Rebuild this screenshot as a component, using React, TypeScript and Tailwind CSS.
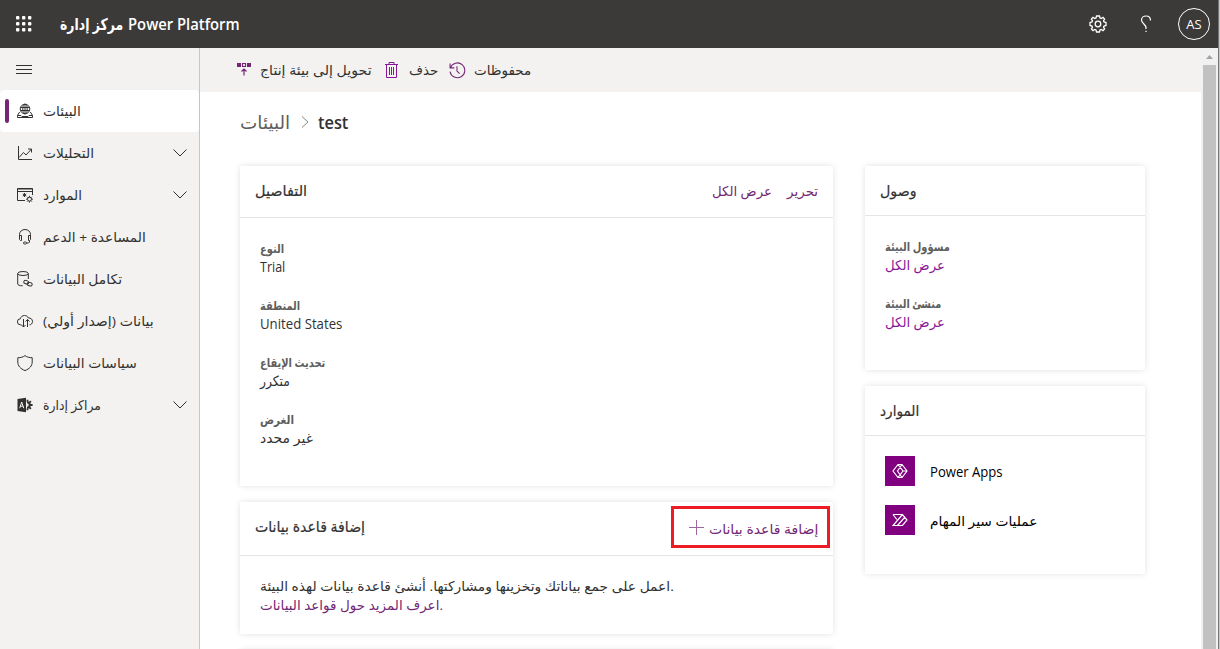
import React, { useLayoutEffect, useRef, useState } from 'react';

interface FitProps {
  w: number;
  className?: string;
  children: React.ReactNode;
}

// Single-line label squeezed or stretched to a fixed width
const Fit: React.FC<FitProps> = ({ w, className = '', children }) => {
  const ref = useRef<HTMLSpanElement>(null);
  const [scale, setScale] = useState(1);

  useLayoutEffect(() => {
    if (ref.current) setScale(w / ref.current.offsetWidth);
  }, [w]);

  return (
    <span className={`block shrink-0 whitespace-nowrap ${className}`} style={{ width: w }}>
      <span ref={ref} className="inline-block origin-left" style={{ transform: `scaleX(${scale})` }}>
        {children}
      </span>
    </span>
  );
};

const Svg: React.FC<{ className?: string; children: React.ReactNode }> = ({ className = 'w-4 h-4', children }) => (
  <svg viewBox="0 0 16 16" fill="none" stroke="currentColor" strokeWidth="1" className={`block shrink-0 ${className}`}>
    {children}
  </svg>
);

const GlobeIcon = () => (
  <Svg>
    <circle cx="8" cy="6" r="4.800" />
    <ellipse cx="8" cy="6" rx="2.200" ry="4.800" />
    <path d="M3.500 4.500h9M3.500 7.500h9M8 1.200v9.600M3 9.500H2.200L.5 12.500v2h15v-2l-1.700-3H13M.7 12.500h3.300l1 1h6l1-1h3.300" />
  </Svg>
);

const ChartIcon = () => (
  <Svg>
    <path d="M1.500 1v13.500H15M2 12.500l4.500-5 2.500 2.500 5.500-6M11 4h3.500v3.500" />
  </Svg>
);

const ResourcesIcon = () => (
  <Svg>
    <path d="M8 13.500H.5v-12h15V8M.5 4.500h15M.5 2h15M7.500 6v4M5.800 7l3.400 2M9.200 7 5.800 9" />
    <circle cx="12.500" cy="12.200" r="2" />
    <path d="M12.500 8.800v1.400M12.500 14.200v1.400M9.100 12.200h1.400M14.500 12.200h1.400M10.100 9.800l1 1M13.900 13.600l1 1M14.900 9.800l-1 1M11.100 13.600l-1 1" />
  </Svg>
);

const HeadsetIcon = () => (
  <Svg>
    <path d="M2.500 7V5.500C2.500 2.500 5 .5 8 .5s5.500 2 5.500 5V7M2.500 6.500h2v5h-1l-1-1zM13.500 6.500h-2v5h1l1-1zM12.500 11.500v1.500l-1 1H9.500" />
    <rect x="6.500" y="13" width="3" height="2" rx="1" />
  </Svg>
);

const DataIcon = () => (
  <Svg>
    <ellipse cx="6" cy="2.500" rx="5.300" ry="2" />
    <path d="M.7 2.500v10.500c0 1 2 1.800 5 1.800M11.300 2.500V8" />
    <rect x="6.800" y="9.500" width="5" height="3.300" rx="1.600" transform="rotate(15 9 11)" />
    <rect x="10.200" y="11.500" width="5" height="3.300" rx="1.600" transform="rotate(15 12.500 13)" />
  </Svg>
);

const CloudIcon = () => (
  <Svg>
    <path d="M4.500 11.800H3.500a3 3 0 0 1-.2-6C3.800 3.700 5.500 2.500 7.500 2.500c1.800 0 3.200.9 3.900 2.500 2.300-.2 4.100 1.300 4.100 3.400s-1.300 3.400-3 3.400M6.500 6v8M4.500 12l2 2 2-2M10.500 14V6.500M8.500 8.500l2-2 2 2" />
  </Svg>
);

const ShieldIcon = () => (
  <Svg>
    <path d="M8 .6c2 1.600 4.500 2.100 7.200 2.100V7c0 4-2.700 6.800-7.200 8.600C3.500 13.800.8 11 .8 7V2.700C3.500 2.700 6 2.200 8 .6z" />
  </Svg>
);

const AdminIcon = () => (
  <Svg>
    <path d="M.5 2 9 .8v14.400L.5 14z" fill="currentColor" stroke="none" />
    <path d="M2.700 11.200 4.700 5l2 6.200M3.300 9.200h2.900" stroke="#f3f2f1" />
    <path d="M10 5.300a2.700 2.700 0 0 1 0 5.400" strokeWidth="2" />
    <path d="M10.500 2.800v2M10.500 11.200v2M13 8h2.600M12.200 5.800l1.700-1.700M12.200 10.200l1.700 1.700" strokeWidth="1.800" />
  </Svg>
);

const Chevron = () => (
  <svg viewBox="0 0 14 8" fill="none" stroke="currentColor" className="w-3.5 h-2 block">
    <path d="M.5.5 7 7 13.500.5" />
  </svg>
);

const navItems = [
  { label: 'البيئات', w: 38, icon: <GlobeIcon />, active: true },
  { label: 'التحليلات', w: 51, icon: <ChartIcon />, expandable: true },
  { label: 'الموارد', w: 39, icon: <ResourcesIcon />, expandable: true },
  { label: 'المساعدة + الدعم', w: 103, icon: <HeadsetIcon /> },
  { label: 'تكامل البيانات', w: 79, icon: <DataIcon /> },
  { label: 'بيانات (إصدار أولي)', w: 111, icon: <CloudIcon /> },
  { label: 'سياسات البيانات', w: 94, icon: <ShieldIcon /> },
  { label: 'مراكز إدارة', w: 58, icon: <AdminIcon />, expandable: true },
];

const details = [
  { label: 'النوع', lw: 24, value: 'Trial', vw: 25 },
  { label: 'المنطقة', lw: 40, value: 'United States', vw: 82 },
  { label: 'تحديث الإيقاع', lw: 65, value: 'متكرر', vw: 30 },
  { label: 'الغرض', lw: 34, value: 'غير محدد', vw: 53 },
];

const access = [
  { label: 'مسؤول البيئة', w: 65 },
  { label: 'منشئ البيئة', w: 56 },
];

const Header = () => (
  <header className="h-12 shrink-0 bg-[#3b3a39] text-white flex items-center pl-4">
    <svg viewBox="0 0 16 16" fill="currentColor" className="w-4 h-4">
      {[0, 6, 12].map((y) => [0, 6, 12].map((x) => <rect key={`${x}-${y}`} x={x} y={y} width="3.400" height="3.400" rx="1" />))}
    </svg>
    <div className="ml-[28px] flex gap-[5px] text-base font-semibold">
      <Fit w={63}>مركز إدارة</Fit>
      <Fit w={112}>Power Platform</Fit>
    </div>
    <div className="ml-auto flex items-center pr-2">
      <svg viewBox="0 0 18 18" fill="none" stroke="currentColor" strokeWidth="1.300" className="w-[18px] h-[18px]">
        <path d="M7.500 1h3l.5 2 1.200.5L14 2.400 15.600 4l-1.100 1.800.5 1.200 2 .5v3l-2 .5-.5 1.200 1.100 1.800-1.600 1.600-1.800-1.100-1.200.5-.5 2h-3L7 15l-1.200-.5L4 15.600 2.400 14l1.100-1.800L3 11l-2-.5v-3L3 7l.5-1.200L2.400 4 4 2.400l1.800 1.100L7 3z" />
        <circle cx="9" cy="9" r="2.800" />
      </svg>
      <svg viewBox="0 0 12 18" fill="none" stroke="currentColor" strokeWidth="1.200" className="w-3 h-[18px] ml-[33px]">
        <path d="M10.500 5.500C10.500 2.800 8.600 1 6 1S1.500 2.800 1.500 5c0 3.500 4.500 4 4.500 7.800V14M6 15.700V17" />
      </svg>
      <div className="w-8 h-8 ml-[26px] rounded-full border border-white flex items-center justify-center text-[13px] pt-0.5">AS</div>
    </div>
  </header>
);

const Sidebar = () => (
  <aside className="w-[200px] shrink-0 bg-[#f3f2f1] border-r border-[#c8c6c4] text-[#323130]">
    <div className="h-[42px] pl-4 flex items-center">
      <svg viewBox="0 0 16 11" stroke="currentColor" className="w-4 h-[11px]">
        <path d="M0 1.500h16M0 5.500h16M0 9.500h16" />
      </svg>
    </div>
    <nav>
      {navItems.map((item) => (
        <div key={item.label} className={`h-[42px] flex items-center pr-3 ${item.active ? 'bg-white rounded-sm' : ''}`}>
          <div className={`w-1 h-6 ml-[5px] mr-2 rounded-sm ${item.active ? 'bg-[#742774]' : ''}`} />
          {item.icon}
          <Fit w={item.w} className="ml-2.5">{item.label}</Fit>
          {item.expandable && <div className="ml-auto"><Chevron /></div>}
        </div>
      ))}
    </nav>
  </aside>
);

const Toolbar = () => (
  <div className="h-11 shrink-0 bg-[#f3f2f1] flex items-center pl-9 text-[#323130]">
    <Svg className="w-4 h-4 text-[#742774]">
      <path d="M1 1h4v4H1zM11 1h4v4h-4z" fill="currentColor" stroke="none" />
      <path d="M6.500 1.500h3v3h-3zM8 13.500V7M5.500 9.500 8 7l2.500 2.500" strokeWidth="1.200" />
    </Svg>
    <Fit w={112} className="ml-2">تحويل إلى بيئة إنتاج</Fit>
    <Svg className="w-4 h-4 ml-3 text-[#881798]">
      <path d="M1 2.500h13M5 2.500v-2h5v2M2.500 2.500v13h10v-13M5.500 5v8M7.500 5v8M9.500 5v8" />
    </Svg>
    <Fit w={29} className="ml-[9px]">حذف</Fit>
    <Svg className="w-[17px] h-[17px] ml-[11px] text-[#742774]">
      <path d="M1 1.500v4h4M1.300 5.500A7 7 0 1 1 1 9M7.500 4v4.500l2.500 2.500" />
    </Svg>
    <Fit w={57} className="ml-2">محفوظات</Fit>
  </div>
);

const card = 'bg-white shadow-[0_0_6px_rgba(0,0,0,0.12)]';
const cardTitle = 'text-[15px] text-[#323130] [-webkit-text-stroke:0.2px_#323130]';

const DetailsCard = () => (
  <section className={`${card} h-80`}>
    <div className="h-[52px] pl-[15px] pr-4 border-b border-[#e5e5e5] flex items-center text-[#742774]">
      <Fit w={52} className={`${cardTitle} pb-0.5`}>التفاصيل</Fit>
      <Fit w={60} className="ml-auto">عرض الكل</Fit>
      <Fit w={31} className="ml-[15px] -mr-px">تحرير</Fit>
    </div>
    <div className="pt-[21px] pl-5 flex flex-col gap-5">
      {details.map((d) => (
        <div key={d.label}>
          <Fit w={d.lw} className="text-xs/[19px] font-semibold text-[#605e5c]">{d.label}</Fit>
          <Fit w={d.vw} className="-mt-px text-sm/[19px] text-[#323130]">{d.value}</Fit>
        </div>
      ))}
    </div>
  </section>
);

const DatabaseCard = () => (
  <section className={`${card} h-[132px]`}>
    <div className="relative h-[54px] pl-[15px] pr-4 border-b border-[#e5e5e5] flex items-center text-[#742774]">
      <Fit w={110} className={`${cardTitle} pb-1`}>إضافة قاعدة بيانات</Fit>
      <svg viewBox="0 0 15 15" stroke="currentColor" className="w-[15px] h-[15px] ml-auto mb-0.5 opacity-70">
        <path d="M0 7.500h15M7.500 0v15" />
      </svg>
      <Fit w={109} className="ml-[5px] -mr-px pt-0.5">إضافة قاعدة بيانات</Fit>
      <div className="absolute right-[3px] top-1 w-[159px] h-[42px] border-[3px] border-[#ed1c24]" />
    </div>
    <div className="pt-[21px] pl-5 leading-[19px]">
      <Fit w={414} className="text-[#323130]">اعمل على جمع بياناتك وتخزينها ومشاركتها. أنشئ قاعدة بيانات لهذه البيئة.</Fit>
      <Fit w={183} className="text-[#742774]">اعرف المزيد حول قواعد البيانات.</Fit>
    </div>
  </section>
);

const AccessCard = () => (
  <section className={`${card} h-[204px]`}>
    <div className="h-[50px] px-[15px] border-b border-[#e5e5e5] flex items-center">
      <Fit w={37} className={cardTitle}>وصول</Fit>
    </div>
    <div className="pt-[21px] pl-5 flex flex-col gap-[19px] leading-[19px]">
      {access.map((a) => (
        <div key={a.label}>
          <Fit w={a.w} className="text-xs/[19px] font-semibold text-[#605e5c]">{a.label}</Fit>
          <Fit w={60} className="text-[#881798]">عرض الكل</Fit>
        </div>
      ))}
    </div>
  </section>
);

const ResourcesCard = () => (
  <section className={`${card} h-[188px]`}>
    <div className="h-[50px] px-[15px] border-b border-[#e5e5e5] flex items-center">
      <Fit w={39} className={cardTitle}>الموارد</Fit>
    </div>
    <div className="pt-5 pl-5 flex flex-col gap-[19px] text-black">
      <div className="flex items-center h-[30px] gap-[15px]">
        <div className="w-[30px] h-[30px] bg-[#800080] text-white flex items-center justify-center">
          <Svg>
            <path d="M6 1.500h4l5 6.500-5 6.500H6L1 8zM6 1.500l5 6.500-5 6.500M10 1.500 5.500 8l4.500 6.500M11 8h4" strokeWidth="1.200" />
          </Svg>
        </div>
        <Fit w={73} className="text-sm pt-0.5">Power Apps</Fit>
      </div>
      <div className="flex items-center h-[30px] gap-[15px]">
        <div className="w-[30px] h-[30px] bg-[#800080] text-white flex items-center justify-center">
          <Svg>
            <path d="M1 2.500h9.500L15 8l-4.500 5.500H1L10.500 2.500M1 2.500 4.800 7.500M5.500 13.500 13 5" strokeWidth="1.200" />
          </Svg>
        </div>
        <Fit w={107} className="pt-0.5">عمليات سير المهام</Fit>
      </div>
    </div>
  </section>
);

const App = () => (
  <div className="w-[1220px] h-[649px] overflow-hidden flex bg-white text-[13.5px] font-['Open_Sans','DejaVu_Sans',sans-serif]">
    <div className="w-[1218px] flex flex-col">
      <Header />
      <div className="flex flex-1 min-h-0">
        <Sidebar />
        <main className="flex-1 flex flex-col min-w-0">
          <Toolbar />
          <div className="pl-10 pt-[9px] flex items-center h-[51px] shrink-0 text-[18px]">
            <Fit w={50} className="text-[#605e5c]">البيئات</Fit>
            <svg viewBox="0 0 8 12" fill="none" stroke="#8a8886" className="w-2 h-3 ml-[11px]">
              <path d="M1 .5 7 6l-6 5.500" />
            </svg>
            <Fit w={30} className="ml-[9px] font-semibold text-[#323130]">test</Fit>
          </div>
          <div className="pl-10 pt-[23px] flex gap-8">
            <div className="w-[593px] flex flex-col gap-4">
              <DetailsCard />
              <DatabaseCard />
              <section className={`${card} h-40`} />
            </div>
            <div className="w-[280px] flex flex-col gap-4">
              <AccessCard />
              <ResourcesCard />
            </div>
          </div>
        </main>
        <div className="w-[17px] bg-[#f1f1f1] flex flex-col items-center">
          <svg viewBox="0 0 17 17" fill="#a3a3a3" className="w-[17px] h-[17px] shrink-0">
            <path d="M5 11 8.500 7l3.500 4z" />
          </svg>
          <div className="w-[13px] flex-1 bg-[#c1c1c1]" />
        </div>
      </div>
    </div>
    <div className="w-px bg-[#767676]" />
    <div className="w-px bg-[#c8c8c8]" />
  </div>
);

export default App;
